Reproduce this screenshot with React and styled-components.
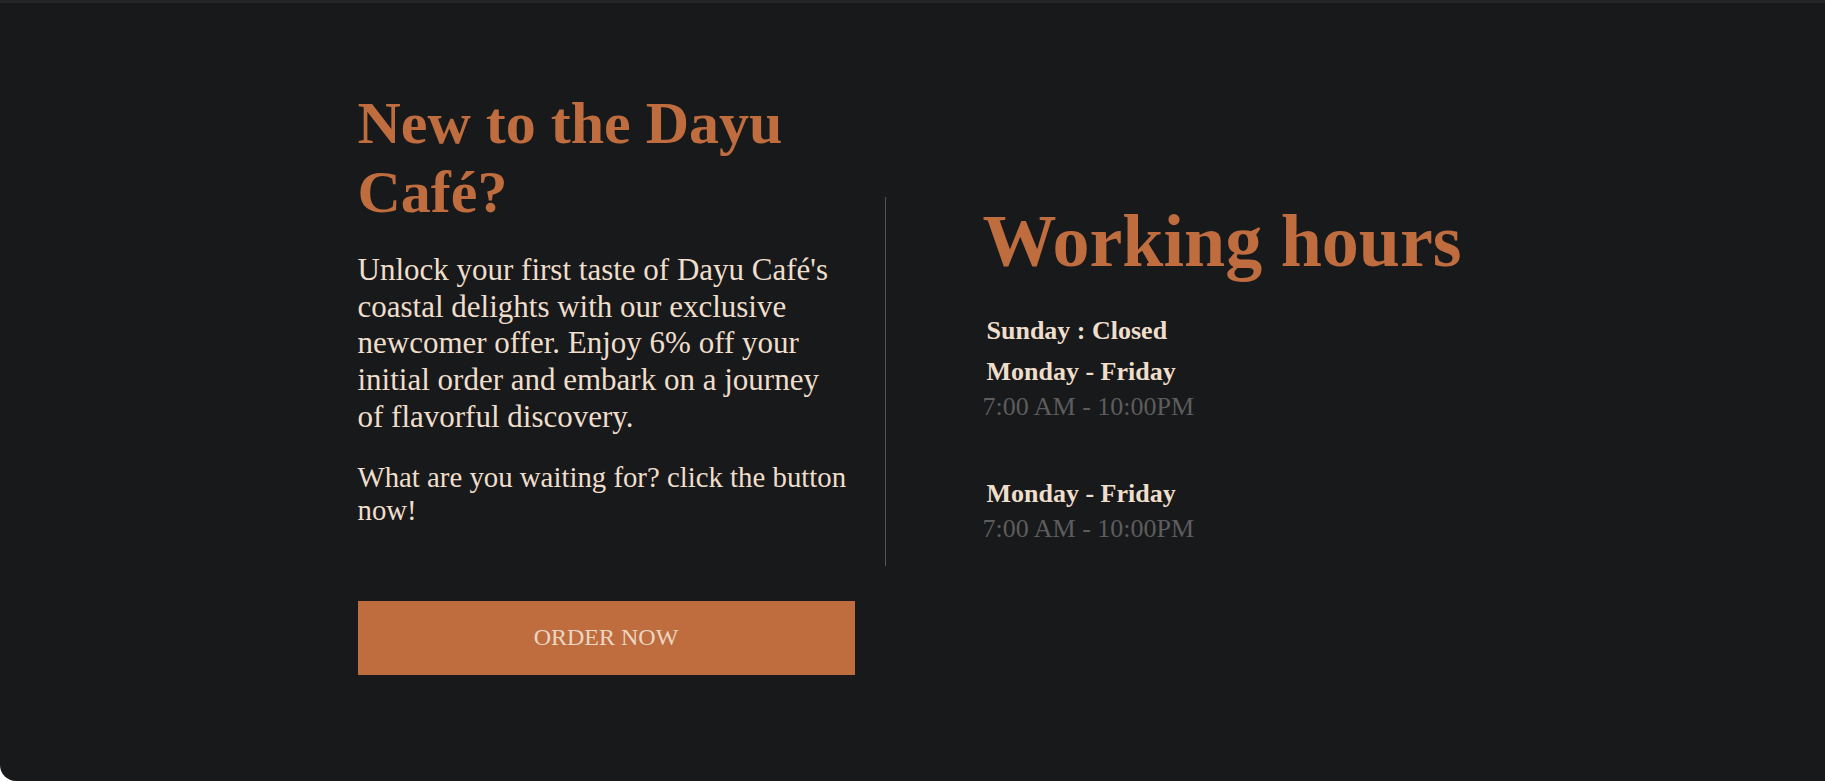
import React from 'react';
import styled, { createGlobalStyle } from 'styled-components';

const GlobalStyle = createGlobalStyle`
  * {
    box-sizing: border-box;
  }
  body {
    margin: 0;
    background: #ffffff;
    font-family: "Liberation Serif", "Times New Roman", serif;
  }
`;

const TopStrip = styled.div`
  height: 3px;
  background: #252525;
`;

const Section = styled.section`
  height: 778px;
  padding-top: 86px;
  background: #18191b;
  border-bottom-left-radius: 16px;
`;

const Row = styled.div`
  display: flex;
  align-items: center;
  width: 1110px;
  margin: 0 auto;
`;

const Intro = styled.div`
  width: 497px;
  flex-shrink: 0;
  display: flex;
  flex-direction: column;
`;

const Title = styled.h1`
  margin: 0 0 25px;
  font-size: 60px;
  line-height: 69px;
  font-weight: bold;
  color: #bf6c3f;
`;

const Text = styled.p`
  max-width: 492px;
  margin: 0 0 ${(p) => p.$after || 0}px;
  font-size: ${(p) => p.$size}px;
  line-height: ${(p) => p.$line};
  color: #efdecb;
`;

const OrderButton = styled.button`
  margin-top: 74px;
  width: 497px;
  height: 74px;
  border: none;
  background: #bf6c3f;
  color: #ead7c2;
  font-family: inherit;
  font-size: 24px;
  text-transform: uppercase;
  cursor: pointer;
`;

const Divider = styled.div`
  flex-shrink: 0;
  width: 1px;
  height: 369px;
  margin-left: 30px;
  background: #555555;
`;

const Hours = styled.div`
  display: flex;
  flex-direction: column;
  flex-shrink: 0;
  padding: 0 0 20px 97px;
`;

const HoursTitle = styled.h2`
  margin: 0 0 32px;
  font-size: 74px;
  line-height: normal;
  font-weight: bold;
  color: #bf6c3f;
  white-space: nowrap;
`;

const Entry = styled.div`
  display: flex;
  flex-direction: column;
  margin-bottom: ${(p) => p.$after || 0}px;
`;

const Day = styled.div`
  padding-left: 4px;
  font-size: 26px;
  font-weight: bold;
  color: #efdecb;
`;

const Time = styled.div`
  margin-top: 5px;
  font-size: 26px;
  color: #5d5d5d;
`;

const schedule = [
  { day: 'Sunday : Closed', after: 11 },
  { day: 'Monday - Friday', time: '7:00 AM - 10:00PM', after: 57 },
  { day: 'Monday - Friday', time: '7:00 AM - 10:00PM', after: 0 },
];

const App = () => {
  return (
    <>
      <GlobalStyle />
      <TopStrip />
      <Section>
        <Row>
          <Intro>
            <Title>New to the Dayu Café?</Title>
            <Text $size={31} $line="36.7px" $after={25}>
              Unlock your first taste of Dayu Café's coastal delights with our
              exclusive newcomer offer. Enjoy 6% off your initial order and
              embark on a journey of flavorful discovery.
            </Text>
            <Text $size={28.8} $line="normal">
              What are you waiting for? click the button now!
            </Text>
            <OrderButton>Order now</OrderButton>
          </Intro>
          <Divider />
          <Hours>
            <HoursTitle>Working hours</HoursTitle>
            {schedule.map((item, i) => (
              <Entry key={i} $after={item.after}>
                <Day>{item.day}</Day>
                {item.time && <Time>{item.time}</Time>}
              </Entry>
            ))}
          </Hours>
        </Row>
      </Section>
    </>
  );
};

export default App;
